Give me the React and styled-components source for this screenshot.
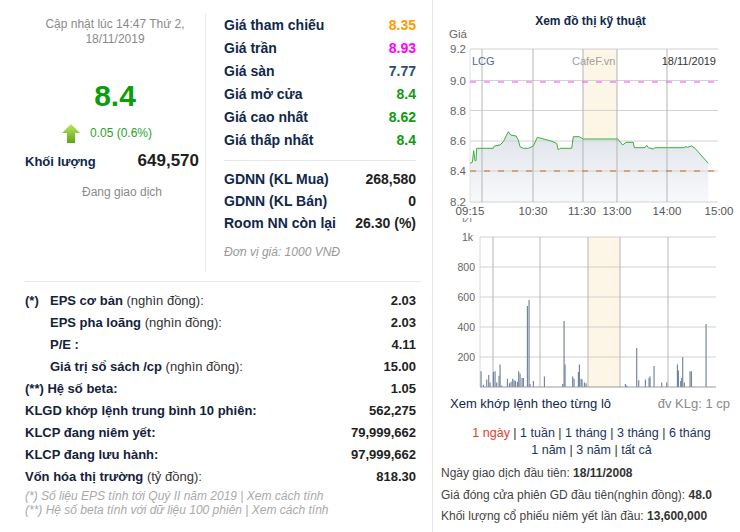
import React from 'react';
import styled, { createGlobalStyle } from 'styled-components';

const GlobalStyle = createGlobalStyle`
  body {
    margin: 0;
    background: #fff;
    font-family: 'Liberation Sans', Arial, sans-serif;
  }
`;

const Page = styled.div`
  display: flex;
  width: 740px;
  height: 532px;
  overflow: hidden;
`;

const LeftPanel = styled.div`
  box-sizing: border-box;
  width: 433px;
  padding: 13px 16px 0 25px;
  border-right: 1px solid #e6e6e6;
`;

const TopSection = styled.div`
  display: flex;
  height: 259px;
`;

const QuotePanel = styled.div`
  box-sizing: border-box;
  width: 181px;
  padding-top: 4px;
  border-right: 1px solid #ececec;
  display: flex;
  flex-direction: column;
`;

const UpdateText = styled.div`
  font-size: 12px;
  line-height: 15px;
  color: #8a8a8a;
  text-align: center;
`;

const BigPrice = styled.div`
  margin-top: 31px;
  font-size: 30px;
  line-height: 36px;
  font-weight: 700;
  color: #0a9e0a;
  text-align: center;
`;

const ChangeRow = styled.div`
  margin-top: 9px;
  display: flex;
  align-items: center;
  justify-content: center;
  gap: 10px;
  padding-right: 16px;
  height: 20px;
`;

const ChangeText = styled.span`
  font-size: 12px;
  color: #2c9f2c;
`;

const VolumeRow = styled.div`
  margin-top: 7px;
  display: flex;
  align-items: center;
  justify-content: space-between;
  padding-right: 6px;
  height: 22px;
`;

const VolumeLabel = styled.span`
  font-size: 13px;
  font-weight: 700;
  color: #10284a;
`;

const VolumeValue = styled.span`
  font-size: 17px;
  font-weight: 700;
  color: #1e1e1e;
`;

const StatusText = styled.div`
  margin-top: 12px;
  padding-left: 14px;
  font-size: 12px;
  line-height: 16px;
  color: #8a8a8a;
  text-align: center;
`;

const PriceTable = styled.div`
  margin-left: 18px;
  flex: 1;
`;

const PriceRow = styled.div`
  display: flex;
  justify-content: space-between;
  align-items: center;
  height: ${(p) => p.$h || 23}px;
  font-size: 14px;
  font-weight: 700;
`;

const PriceLabel = styled.span`
  color: #10284a;
`;

const PriceValue = styled.span`
  color: ${(p) => p.$color || '#222'};
`;

const Separator = styled.div`
  margin: 9px 0 7px;
  border-top: 1px solid #e8e8e8;
`;

const Unit = styled.div`
  margin-top: 10px;
  font-size: 12px;
  line-height: 16px;
  font-style: italic;
  color: #999;
`;

const Divider = styled.div`
  margin: 9px -5px 0 0;
  border-top: 1px solid #e8e8e8;
`;

const StatsTable = styled.div`
  padding-top: 7px;
`;

const StatRow = styled.div`
  display: flex;
  justify-content: space-between;
  align-items: center;
  height: 22px;
  padding-left: ${(p) => (p.$indent ? 25 : 0)}px;
  font-size: 13px;
`;

const StatLabel = styled.span`
  font-weight: 700;
  color: #14223a;
`;

const Marker = styled.span`
  display: inline-block;
  width: 25px;
  font-weight: 700;
  color: #14223a;
`;

const Unbold = styled.span`
  font-weight: 400;
  color: #333;
`;

const StatValue = styled.span`
  font-weight: 700;
  color: #222;
`;

const Notes = styled.div`
  margin-top: 2px;
  font-size: 12px;
  line-height: 14px;
  font-style: italic;
  color: #a9a9a9;
`;

const RightPanel = styled.div`
  flex: 1;
  display: flex;
  flex-direction: column;
`;

const ChartTitle = styled.div`
  margin-top: 13px;
  font-size: 12px;
  line-height: 16px;
  font-weight: 700;
  color: #10284a;
  text-align: center;
  padding-left: 8px;
`;

const Chart = styled.svg`
  display: block;
  margin-top: ${(p) => p.$top || 0}px;
  font-family: 'Liberation Sans', Arial, sans-serif;
`;

const KhopRow = styled.div`
  margin-top: 2px;
  display: flex;
  justify-content: space-between;
  padding: 0 10px 0 17px;
  font-size: 13px;
  line-height: 16px;
`;

const KhopLink = styled.span`
  color: #10284a;
`;

const KhopUnit = styled.span`
  color: #8a8a8a;
`;

const Periods = styled.div`
  margin-top: 13px;
  font-size: 12.5px;
  line-height: 17px;
  color: #333;
  text-align: center;
  padding-left: 10px;
`;

const PeriodLink = styled.span`
  color: ${(p) => (p.$active ? '#e2412c' : '#1a3461')};
`;

const InfoList = styled.div`
  margin-top: 4px;
  padding-left: 8px;
`;

const InfoLine = styled.div`
  font-size: 12px;
  line-height: 21.5px;
  color: #444;

  b {
    color: #333;
  }
`;

const priceLine = [
  [470, 163.3], [472.3, 162.3], [473.7, 150.7], [475, 160.7], [476, 160.7], [476.7, 148.3],
  [493.3, 148.3], [494.3, 146], [500, 145], [503.3, 141.7], [508.3, 131.7], [510.7, 135],
  [516, 136], [518.3, 140], [520, 146.7], [523.3, 148.3], [528.3, 148.3], [533.3, 146],
  [537.3, 137.3], [550, 140.7], [556.7, 143.3], [558.3, 150], [560, 148.3], [571.7, 148.3],
  [573.3, 136.7], [579.3, 136.7], [583.3, 139], [617.7, 139], [622.7, 145], [626, 142.3],
  [633.3, 142.3], [634.3, 147.7], [645, 147.7], [646.7, 145.3], [648.3, 147.7], [653.3, 149],
  [655, 147.7], [683.3, 147.7], [686, 146.7], [687.3, 147.3], [691.7, 146], [695, 148.3],
  [708.3, 163.3],
];

const volumeBars = [
  [153, 105], [160, 15], [170, 50], [176, 80], [180, 30], [190, 100], [195, 105], [200, 30],
  [207, 75], [210, 150], [215, 10], [232, 55], [238, 25], [243, 35], [248, 55], [252, 45],
  [256, 40], [262, 35], [266, 105], [270, 90], [276, 60], [280, 60], [292, 540], [297, 580],
  [300, 20], [310, 40], [343, 70], [398, 20], [402, 440], [405, 150], [428, 70], [432, 55],
  [445, 100], [448, 150], [453, 55], [456, 50], [463, 30], [468, 25], [586, 20], [590, 10],
  [620, 260], [626, 45], [646, 50], [657, 60], [660, 70], [672, 140], [695, 30], [710, 30],
  [742, 150], [745, 110], [752, 40], [755, 60], [758, 200], [763, 30], [780, 105], [784, 105],
  [828, 420],
];

function UpArrow() {
  return (
    <svg width="18" height="19" viewBox="0 0 18 19">
      <defs>
        <linearGradient id="arrowFill" x1="0" y1="0" x2="0" y2="1">
          <stop offset="0" stopColor="#b9e85a" />
          <stop offset="1" stopColor="#5ea51c" />
        </linearGradient>
      </defs>
      <polygon points="9,0 18,9 13,9 13,19 5,19 5,9 0,9" fill="url(#arrowFill)" />
    </svg>
  );
}

function PriceChart() {
  const pts = priceLine.map((p) => p.join(',')).join(' ');
  const area = `${pts} 708.3,202 470,202`;
  const yLabels = [['9.2', 49], ['9.0', 80.5], ['8.8', 110.5], ['8.6', 141], ['8.4', 171], ['8.2', 202]];
  const vLines = [482, 533, 583, 617, 667];
  const times = [['09:15', 470], ['10:30', 533], ['11:30', 582], ['13:00', 617], ['14:00', 667], ['15:00', 719]];
  return (
    <Chart width="307" height="193" viewBox="433 29 307 193">
      <defs>
        <linearGradient id="areaFill" x1="0" y1="0" x2="0" y2="1">
          <stop offset="0" stopColor="#dfe3ea" />
          <stop offset="1" stopColor="#f8f9fb" />
        </linearGradient>
      </defs>
      <text x="449" y="38" fontSize="11.5" fill="#666">Giá</text>
      <rect x="583" y="49" width="34" height="153" fill="#fdf5e5" />
      <polygon points={area} fill="url(#areaFill)" />
      {yLabels.map(([t, y]) => (
        <g key={t}>
          <line x1="470" y1={y} x2="718" y2={y} stroke="#d2d2d2" strokeWidth="1" />
          <text x="466" y={y + 4} fontSize="11.5" fill="#666" textAnchor="end">{t}</text>
        </g>
      ))}
      <line x1="470" y1="49" x2="470" y2="202" stroke="#e2e2e2" />
      {vLines.map((x) => (
        <line key={x} x1={x} y1="49" x2={x} y2="202" stroke="#b5b5b5" strokeWidth="1" />
      ))}
      <line x1="470" y1="82" x2="718" y2="82" stroke="#f044f0" strokeDasharray="6 8" strokeWidth="1" />
      <line x1="470" y1="171" x2="718" y2="171" stroke="#c8661a" strokeDasharray="6 8" strokeWidth="1" />
      <polyline points={pts} fill="none" stroke="#3bb03b" strokeWidth="1" />
      <text x="472" y="65" fontSize="11" fill="#4b6a96">LCG</text>
      <text x="572" y="65" fontSize="11" fill="#a0a0a0">CafeF.vn</text>
      <text x="716" y="65" fontSize="11" fill="#333" textAnchor="end">18/11/2019</text>
      {times.map(([t, x]) => (
        <text key={t} x={x} y="215" fontSize="11.5" fill="#555" textAnchor="middle">{t}</text>
      ))}
      <text x="462" y="226" fontSize="11" fill="#888">KL</text>
    </Chart>
  );
}

function VolumeChart() {
  const hLines = [['1k', 237], ['800', 267], ['600', 297], ['400', 327], ['200', 357]];
  const vLines = [493, 540, 588, 620, 668];
  return (
    <Chart $top={4} width="307" height="168" viewBox="433 226 307 168">
      <rect x="588" y="237" width="32" height="150" fill="#fdf5e5" />
      {hLines.map(([t, y]) => (
        <g key={t}>
          <line x1="480" y1={y} x2="716" y2={y} stroke="#d2d2d2" strokeWidth="1" />
          <text x={t === '1k' ? 473 : 475} y={y + 4} fontSize="10.5" fill="#666" textAnchor="end">{t}</text>
        </g>
      ))}
      <line x1="480" y1="237" x2="480" y2="387" stroke="#d8d8d8" />
      {vLines.map((x) => (
        <line key={x} x1={x} y1="237" x2={x} y2="387" stroke="#b5b5b5" strokeWidth="1" />
      ))}
      {volumeBars.map(([px, v]) => {
        const x = 430 + px / 3;
        return <rect key={px} x={x - 0.5} y={387 - v * 0.15} width="1.1" height={v * 0.15} fill="#6a7d9b" />;
      })}
      <line x1="480" y1="387" x2="716" y2="387" stroke="#9a9a9a" strokeWidth="1" />
    </Chart>
  );
}

const priceRows = [
  ['Giá tham chiếu', '8.35', '#ff9900'],
  ['Giá trần', '8.93', '#ff00ff'],
  ['Giá sàn', '7.77', '#2a4d74'],
  ['Giá mở cửa', '8.4', '#119911'],
  ['Giá cao nhất', '8.62', '#119911'],
  ['Giá thấp nhất', '8.4', '#119911'],
];

const foreignRows = [
  ['GDNN (KL Mua)', '268,580'],
  ['GDNN (KL Bán)', '0'],
  ['Room NN còn lại', '26.30 (%)'],
];

const periods = ['1 ngày', '1 tuần', '1 tháng', '3 tháng', '6 tháng'];
const periods2 = ['1 năm', '3 năm', 'tất cả'];

export default function App() {
  return (
    <Page>
      <GlobalStyle />
      <LeftPanel>
        <TopSection>
          <QuotePanel>
            <UpdateText>
              Cập nhật lúc 14:47 Thứ 2,
              <br />
              18/11/2019
            </UpdateText>
            <BigPrice>8.4</BigPrice>
            <ChangeRow>
              <UpArrow />
              <ChangeText>0.05 (0.6%)</ChangeText>
            </ChangeRow>
            <VolumeRow>
              <VolumeLabel>Khối lượng</VolumeLabel>
              <VolumeValue>649,570</VolumeValue>
            </VolumeRow>
            <StatusText>Đang giao dịch</StatusText>
          </QuotePanel>
          <PriceTable>
            {priceRows.map(([label, value, color]) => (
              <PriceRow key={label}>
                <PriceLabel>{label}</PriceLabel>
                <PriceValue $color={color}>{value}</PriceValue>
              </PriceRow>
            ))}
            <Separator />
            {foreignRows.map(([label, value]) => (
              <PriceRow key={label} $h={22}>
                <PriceLabel>{label}</PriceLabel>
                <PriceValue>{value}</PriceValue>
              </PriceRow>
            ))}
            <Unit>Đơn vị giá: 1000 VNĐ</Unit>
          </PriceTable>
        </TopSection>
        <Divider />
        <StatsTable>
          <StatRow>
            <StatLabel>
              <Marker>(*)</Marker>EPS cơ bản <Unbold>(nghìn đồng):</Unbold>
            </StatLabel>
            <StatValue>2.03</StatValue>
          </StatRow>
          <StatRow $indent>
            <StatLabel>
              EPS pha loãng <Unbold>(nghìn đồng):</Unbold>
            </StatLabel>
            <StatValue>2.03</StatValue>
          </StatRow>
          <StatRow $indent>
            <StatLabel>P/E :</StatLabel>
            <StatValue>4.11</StatValue>
          </StatRow>
          <StatRow $indent>
            <StatLabel>
              Giá trị sổ sách /cp <Unbold>(nghìn đồng):</Unbold>
            </StatLabel>
            <StatValue>15.00</StatValue>
          </StatRow>
          <StatRow>
            <StatLabel>(**) Hệ số beta:</StatLabel>
            <StatValue>1.05</StatValue>
          </StatRow>
          <StatRow>
            <StatLabel>KLGD khớp lệnh trung bình 10 phiên:</StatLabel>
            <StatValue>562,275</StatValue>
          </StatRow>
          <StatRow>
            <StatLabel>KLCP đang niêm yết:</StatLabel>
            <StatValue>79,999,662</StatValue>
          </StatRow>
          <StatRow>
            <StatLabel>KLCP đang lưu hành:</StatLabel>
            <StatValue>97,999,662</StatValue>
          </StatRow>
          <StatRow>
            <StatLabel>
              Vốn hóa thị trường <Unbold>(tỷ đồng):</Unbold>
            </StatLabel>
            <StatValue>818.30</StatValue>
          </StatRow>
          <Notes>
            (*) Số liệu EPS tính tới Quý II năm 2019 | Xem cách tính
            <br />
            (**) Hệ số beta tính với dữ liệu 100 phiên | Xem cách tính
          </Notes>
        </StatsTable>
      </LeftPanel>
      <RightPanel>
        <ChartTitle>Xem đồ thị kỹ thuật</ChartTitle>
        <PriceChart />
        <VolumeChart />
        <KhopRow>
          <KhopLink>Xem khớp lệnh theo từng lô</KhopLink>
          <KhopUnit>đv KLg: 1 cp</KhopUnit>
        </KhopRow>
        <Periods>
          {periods.map((p, i) => (
            <React.Fragment key={p}>
              {i > 0 && ' | '}
              <PeriodLink $active={i === 0}>{p}</PeriodLink>
            </React.Fragment>
          ))}
          <br />
          {periods2.map((p, i) => (
            <React.Fragment key={p}>
              {i > 0 && ' | '}
              <PeriodLink>{p}</PeriodLink>
            </React.Fragment>
          ))}
        </Periods>
        <InfoList>
          <InfoLine>
            Ngày giao dịch đầu tiên: <b>18/11/2008</b>
          </InfoLine>
          <InfoLine>
            Giá đóng cửa phiên GD đầu tiên(nghìn đồng): <b>48.0</b>
          </InfoLine>
          <InfoLine>
            Khối lượng cổ phiếu niêm yết lần đầu: <b>13,600,000</b>
          </InfoLine>
        </InfoList>
      </RightPanel>
    </Page>
  );
}
